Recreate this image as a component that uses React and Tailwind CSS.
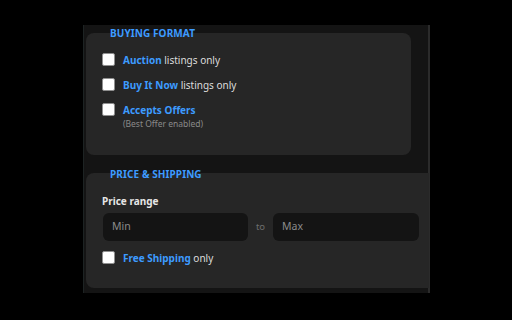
import React from "react";

const font = { fontFamily: '"Noto Sans", "Open Sans", sans-serif' };

const Box = () => (
  <span className="w-[13px] h-[13px] shrink-0 bg-white border border-[#8f8f8f] rounded-[2px]" />
);

const CheckRow = ({ label, rest }) => (
  <div className="flex items-center h-[25px] pl-[16px]">
    <Box />
    <span className="ml-[8px] text-[10px] leading-[14px]">
      <span className="font-bold text-[#3d9bff]">{label}</span>
      {rest && <span className="text-[#dcdcdc]"> {rest}</span>}
    </span>
  </div>
);

export default function App() {
  return (
    <div className="w-[512px] h-[320px] bg-black overflow-hidden pt-[25px] pl-[83px]" style={font}>
      <div className="w-[347px] h-[268px] bg-[#141414] border-l border-l-[#1d2323] border-r-2 border-r-[#2b2b2b] pl-[2px] pt-[8px] flex flex-col">
        {/* Buying format */}
        <div className="w-[325px] h-[122px] bg-[#262626] rounded-lg flex flex-col">
          <div className="-mt-[6px] ml-[24px] text-[10px] leading-[12px] font-bold tracking-[0.01em] text-[#3d9bff]">
            BUYING FORMAT
          </div>
          <div className="mt-[8px]">
            <CheckRow label="Auction" rest="listings only" />
            <CheckRow label="Buy It Now" rest="listings only" />
            <CheckRow label="Accepts Offers" />
            <div className="-mt-[4px] ml-[37px] text-[8.5px] leading-[12px] text-[#8a8a8a]">
              (Best Offer enabled)
            </div>
          </div>
        </div>

        {/* Price & shipping */}
        <div className="mt-[18px] w-[343px] h-[115px] bg-[#262626] rounded-l-lg flex flex-col">
          <div className="-mt-[5px] ml-[24px] text-[10px] leading-[12px] font-bold tracking-[0.01em] text-[#3d9bff]">
            PRICE &amp; SHIPPING
          </div>
          <div className="mt-[14px] ml-[16px] text-[10px] leading-[14px] font-bold text-[#e6e6e6]">
            Price range
          </div>
          <div className="mt-[5px] ml-[17px] flex items-center">
            <div className="w-[145px] h-[28px] bg-[#141414] rounded-md flex items-center pl-[9px] text-[10.5px] text-[#8a8a8a]">
              Min
            </div>
            <span className="w-[25px] text-center text-[9.5px] text-[#6e6e6e]">to</span>
            <div className="w-[146px] h-[28px] bg-[#141414] rounded-md flex items-center pl-[9px] text-[10.5px] text-[#8a8a8a]">
              Max
            </div>
          </div>
          <div className="mt-[4px]">
            <CheckRow label="Free Shipping" rest="only" />
          </div>
        </div>
      </div>
    </div>
  );
}
